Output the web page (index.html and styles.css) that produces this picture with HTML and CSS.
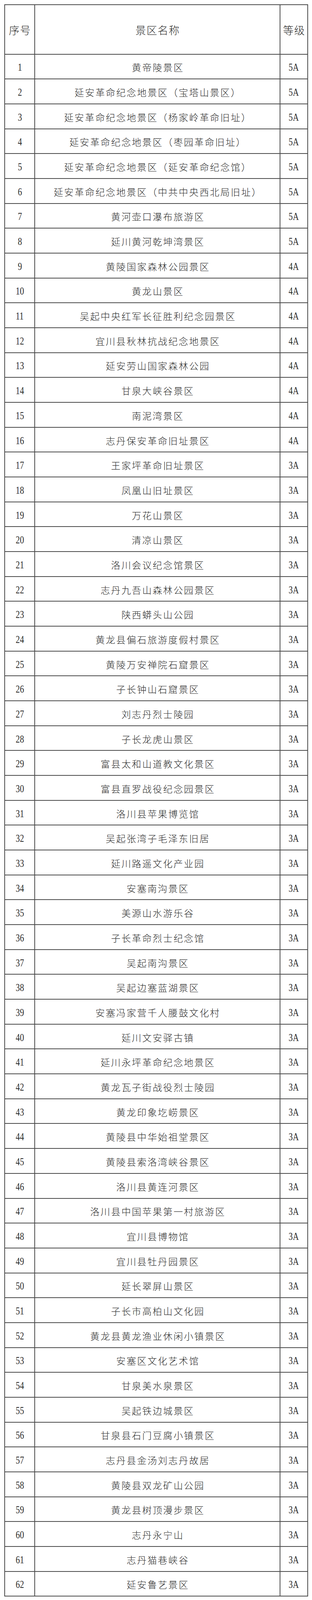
FILE: index.html
```html
<!DOCTYPE html>
<html lang="zh-CN">
<head>
<meta charset="utf-8">
<title>延安市A级旅游景区名录</title>
<link rel="stylesheet" href="styles.css">
</head>
<body>
<div class="page">
<div class="list" role="table">
<div class="cell head" role="columnheader">序号</div><div class="cell head" role="columnheader">景区名称</div><div class="cell head" role="columnheader">等级</div>
<div class="cell num"><span>1</span></div><div class="cell name">黄帝陵景区</div><div class="cell num"><span>5A</span></div>
<div class="cell num"><span>2</span></div><div class="cell name">延安革命纪念地景区（宝塔山景区）</div><div class="cell num"><span>5A</span></div>
<div class="cell num"><span>3</span></div><div class="cell name">延安革命纪念地景区（杨家岭革命旧址）</div><div class="cell num"><span>5A</span></div>
<div class="cell num"><span>4</span></div><div class="cell name">延安革命纪念地景区（枣园革命旧址）</div><div class="cell num"><span>5A</span></div>
<div class="cell num"><span>5</span></div><div class="cell name">延安革命纪念地景区（延安革命纪念馆）</div><div class="cell num"><span>5A</span></div>
<div class="cell num"><span>6</span></div><div class="cell name">延安革命纪念地景区（中共中央西北局旧址）</div><div class="cell num"><span>5A</span></div>
<div class="cell num"><span>7</span></div><div class="cell name">黄河壶口瀑布旅游区</div><div class="cell num"><span>5A</span></div>
<div class="cell num"><span>8</span></div><div class="cell name">延川黄河乾坤湾景区</div><div class="cell num"><span>5A</span></div>
<div class="cell num"><span>9</span></div><div class="cell name">黄陵国家森林公园景区</div><div class="cell num"><span>4A</span></div>
<div class="cell num"><span>10</span></div><div class="cell name">黄龙山景区</div><div class="cell num"><span>4A</span></div>
<div class="cell num"><span>11</span></div><div class="cell name">吴起中央红军长征胜利纪念园景区</div><div class="cell num"><span>4A</span></div>
<div class="cell num"><span>12</span></div><div class="cell name">宜川县秋林抗战纪念地景区</div><div class="cell num"><span>4A</span></div>
<div class="cell num"><span>13</span></div><div class="cell name">延安劳山国家森林公园</div><div class="cell num"><span>4A</span></div>
<div class="cell num"><span>14</span></div><div class="cell name">甘泉大峡谷景区</div><div class="cell num"><span>4A</span></div>
<div class="cell num"><span>15</span></div><div class="cell name">南泥湾景区</div><div class="cell num"><span>4A</span></div>
<div class="cell num"><span>16</span></div><div class="cell name">志丹保安革命旧址景区</div><div class="cell num"><span>4A</span></div>
<div class="cell num"><span>17</span></div><div class="cell name">王家坪革命旧址景区</div><div class="cell num"><span>3A</span></div>
<div class="cell num"><span>18</span></div><div class="cell name">凤凰山旧址景区</div><div class="cell num"><span>3A</span></div>
<div class="cell num"><span>19</span></div><div class="cell name">万花山景区</div><div class="cell num"><span>3A</span></div>
<div class="cell num"><span>20</span></div><div class="cell name">清凉山景区</div><div class="cell num"><span>3A</span></div>
<div class="cell num"><span>21</span></div><div class="cell name">洛川会议纪念馆景区</div><div class="cell num"><span>3A</span></div>
<div class="cell num"><span>22</span></div><div class="cell name">志丹九吾山森林公园景区</div><div class="cell num"><span>3A</span></div>
<div class="cell num"><span>23</span></div><div class="cell name">陕西蟒头山公园</div><div class="cell num"><span>3A</span></div>
<div class="cell num"><span>24</span></div><div class="cell name">黄龙县偏石旅游度假村景区</div><div class="cell num"><span>3A</span></div>
<div class="cell num"><span>25</span></div><div class="cell name">黄陵万安禅院石窟景区</div><div class="cell num"><span>3A</span></div>
<div class="cell num"><span>26</span></div><div class="cell name">子长钟山石窟景区</div><div class="cell num"><span>3A</span></div>
<div class="cell num"><span>27</span></div><div class="cell name">刘志丹烈士陵园</div><div class="cell num"><span>3A</span></div>
<div class="cell num"><span>28</span></div><div class="cell name">子长龙虎山景区</div><div class="cell num"><span>3A</span></div>
<div class="cell num"><span>29</span></div><div class="cell name">富县太和山道教文化景区</div><div class="cell num"><span>3A</span></div>
<div class="cell num"><span>30</span></div><div class="cell name">富县直罗战役纪念园景区</div><div class="cell num"><span>3A</span></div>
<div class="cell num"><span>31</span></div><div class="cell name">洛川县苹果博览馆</div><div class="cell num"><span>3A</span></div>
<div class="cell num"><span>32</span></div><div class="cell name">吴起张湾子毛泽东旧居</div><div class="cell num"><span>3A</span></div>
<div class="cell num"><span>33</span></div><div class="cell name">延川路遥文化产业园</div><div class="cell num"><span>3A</span></div>
<div class="cell num"><span>34</span></div><div class="cell name">安塞南沟景区</div><div class="cell num"><span>3A</span></div>
<div class="cell num"><span>35</span></div><div class="cell name">美源山水游乐谷</div><div class="cell num"><span>3A</span></div>
<div class="cell num"><span>36</span></div><div class="cell name">子长革命烈士纪念馆</div><div class="cell num"><span>3A</span></div>
<div class="cell num"><span>37</span></div><div class="cell name">吴起南沟景区</div><div class="cell num"><span>3A</span></div>
<div class="cell num"><span>38</span></div><div class="cell name">吴起边塞蓝湖景区</div><div class="cell num"><span>3A</span></div>
<div class="cell num"><span>39</span></div><div class="cell name">安塞冯家营千人腰鼓文化村</div><div class="cell num"><span>3A</span></div>
<div class="cell num"><span>40</span></div><div class="cell name">延川文安驿古镇</div><div class="cell num"><span>3A</span></div>
<div class="cell num"><span>41</span></div><div class="cell name">延川永坪革命纪念地景区</div><div class="cell num"><span>3A</span></div>
<div class="cell num"><span>42</span></div><div class="cell name">黄龙瓦子街战役烈士陵园</div><div class="cell num"><span>3A</span></div>
<div class="cell num"><span>43</span></div><div class="cell name">黄龙印象圪崂景区</div><div class="cell num"><span>3A</span></div>
<div class="cell num"><span>44</span></div><div class="cell name">黄陵县中华始祖堂景区</div><div class="cell num"><span>3A</span></div>
<div class="cell num"><span>45</span></div><div class="cell name">黄陵县索洛湾峡谷景区</div><div class="cell num"><span>3A</span></div>
<div class="cell num"><span>46</span></div><div class="cell name">洛川县黄连河景区</div><div class="cell num"><span>3A</span></div>
<div class="cell num"><span>47</span></div><div class="cell name">洛川县中国苹果第一村旅游区</div><div class="cell num"><span>3A</span></div>
<div class="cell num"><span>48</span></div><div class="cell name">宜川县博物馆</div><div class="cell num"><span>3A</span></div>
<div class="cell num"><span>49</span></div><div class="cell name">宜川县牡丹园景区</div><div class="cell num"><span>3A</span></div>
<div class="cell num"><span>50</span></div><div class="cell name">延长翠屏山景区</div><div class="cell num"><span>3A</span></div>
<div class="cell num"><span>51</span></div><div class="cell name">子长市高柏山文化园</div><div class="cell num"><span>3A</span></div>
<div class="cell num"><span>52</span></div><div class="cell name">黄龙县黄龙渔业休闲小镇景区</div><div class="cell num"><span>3A</span></div>
<div class="cell num"><span>53</span></div><div class="cell name">安塞区文化艺术馆</div><div class="cell num"><span>3A</span></div>
<div class="cell num"><span>54</span></div><div class="cell name">甘泉美水泉景区</div><div class="cell num"><span>3A</span></div>
<div class="cell num"><span>55</span></div><div class="cell name">吴起铁边城景区</div><div class="cell num"><span>3A</span></div>
<div class="cell num"><span>56</span></div><div class="cell name">甘泉县石门豆腐小镇景区</div><div class="cell num"><span>3A</span></div>
<div class="cell num"><span>57</span></div><div class="cell name">志丹县金汤刘志丹故居</div><div class="cell num"><span>3A</span></div>
<div class="cell num"><span>58</span></div><div class="cell name">黄陵县双龙矿山公园</div><div class="cell num"><span>3A</span></div>
<div class="cell num"><span>59</span></div><div class="cell name">黄龙县树顶漫步景区</div><div class="cell num"><span>3A</span></div>
<div class="cell num"><span>60</span></div><div class="cell name">志丹永宁山</div><div class="cell num"><span>3A</span></div>
<div class="cell num"><span>61</span></div><div class="cell name">志丹猫巷峡谷</div><div class="cell num"><span>3A</span></div>
<div class="cell num"><span>62</span></div><div class="cell name">延安鲁艺景区</div><div class="cell num"><span>3A</span></div>
</div>
</div>
</body>
</html>
```

FILE: styles.css
```css
html, body {
  margin: 0;
  padding: 0;
  background: #ffffff;
}

.page {
  padding: 10.8px 0 0 11px;
}

.list {
  display: grid;
  grid-template-columns: 77px 629px 71px;
  grid-template-rows: 126.8px repeat(62, 63.68px);
  width: 779px;
  box-sizing: border-box;
  border-top: 2px solid #4a4a4a;
  border-left: 2px solid #4a4a4a;
  color: #2b2b2b;
  font-family: "Noto Sans CJK SC", "Noto Sans", sans-serif;
}

.cell {
  box-sizing: border-box;
  display: flex;
  align-items: center;
  justify-content: center;
  border-right: 2px solid #4a4a4a;
  border-bottom: 2px solid #4a4a4a;
  padding-top: 4px;
  overflow: hidden;
  white-space: nowrap;
  min-width: 0;
  min-height: 0;
}

.head {
  font-size: 27px;
  font-weight: 300;
  letter-spacing: 1.5px;
  padding-left: 1.5px;
  line-height: 32px;
}

.name {
  font-size: 24px;
  font-weight: 300;
  letter-spacing: 2.7px;
  padding-left: 2.7px;
  line-height: 30px;
}

.num {
  font-family: "Liberation Serif", "Times New Roman", serif;
  font-size: 28px;
  line-height: 30px;
}

.num span {
  display: inline-block;
  transform: scaleX(0.76);
}
```
